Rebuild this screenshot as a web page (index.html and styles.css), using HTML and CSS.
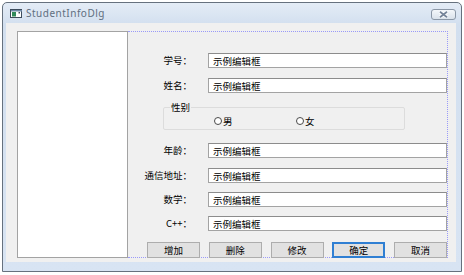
FILE: index.html
```html
<!DOCTYPE html>
<html>
<head>
<meta charset="utf-8">
<title>StudentInfoDlg</title>
<link rel="stylesheet" href="styles.css">
</head>
<body>
<div class="window">
  <div class="titlebar">
    <svg class="appicon" width="12" height="9" viewBox="0 0 12 9">
      <rect x="0.5" y="0.5" width="11" height="8" fill="#ffffff" stroke="#3d4c5c"/>
      <rect x="1" y="1" width="11" height="1.5" fill="#6f8aa8"/>
      <rect x="2" y="3" width="4" height="4.5" fill="#2f8a5a"/>
      <rect x="8.5" y="3" width="1.5" height="1.5" fill="#3d4c5c"/>
    </svg>
    <span class="title">StudentInfoDlg</span>
    <span class="closebtn">
      <svg width="11" height="7" viewBox="0 0 11 7">
        <path d="M2 0.8 L9 6.2 M9 0.8 L2 6.2" stroke="#ffffff" stroke-width="3.4"/>
        <path d="M2 0.8 L9 6.2 M9 0.8 L2 6.2" stroke="#76859a" stroke-width="1.8"/>
      </svg>
    </span>
  </div>
  <div class="client">
    <div class="listbox"></div>
    <div class="form">
      <div class="row">
        <label>学号：</label>
        <input type="text" value="示例编辑框" readonly>
      </div>
      <div class="row gap10">
        <label>姓名：</label>
        <input type="text" value="示例编辑框" readonly>
      </div>
      <fieldset class="group">
        <legend>性别</legend>
        <div class="radios">
          <span class="radio"><span class="dot"></span>男</span>
          <span class="radio"><span class="dot"></span>女</span>
        </div>
      </fieldset>
      <div class="row gap13">
        <label>年龄：</label>
        <input type="text" value="示例编辑框" readonly>
      </div>
      <div class="row gap10">
        <label>通信地址：</label>
        <input type="text" value="示例编辑框" readonly>
      </div>
      <div class="row gap9">
        <label>数学：</label>
        <input type="text" value="示例编辑框" readonly>
      </div>
      <div class="row gap9">
        <label>C++：</label>
        <input type="text" value="示例编辑框" readonly>
      </div>
      <div class="buttons">
        <button>增加</button>
        <button>删除</button>
        <button>修改</button>
        <button class="default">确定</button>
        <button>取消</button>
      </div>
    </div>
  </div>
</div>
</body>
</html>
```

FILE: styles.css
```css
body {
    margin: 0;
    background: #ffffff;
    font-family: "Noto Sans CJK SC", "Noto Sans", sans-serif;
    font-size: 9.5px;
    color: #000000;
}

.window {
    margin: 2px;
    width: 460px;
    height: 270px;
    box-sizing: border-box;
    border: 1px solid #66717e;
    border-radius: 5px 5px 0 0;
    background: linear-gradient(#e4ecf6, #d2dfef 22px, #d8e4f3);
    padding: 0 5px 9px 3px;
    display: flex;
    flex-direction: column;
}

.titlebar {
    height: 20px;
    display: flex;
    align-items: center;
    padding-left: 4px;
}

.appicon {
    display: block;
    margin-right: 4px;
}

.title {
    font-family: "Noto Sans", sans-serif;
    font-size: 10px;
    letter-spacing: 0.5px;
    color: #5f6e80;
}

.closebtn {
    margin-left: auto;
    align-self: flex-start;
    margin-top: 6px;
    width: 25px;
    height: 11px;
    box-sizing: border-box;
    border: 1px solid #8b97a6;
    border-radius: 3px;
    background: linear-gradient(#f4f7fa, #dae2eb);
    display: flex;
    align-items: center;
    justify-content: center;
}

.client {
    flex: 1;
    background: #f0f0f0;
    display: flex;
    padding: 8px 8px 4px 11px;
}

.listbox {
    width: 111px;
    box-sizing: border-box;
    background: #ffffff;
    border: 1px solid #a3a3a3;
}

.form {
    flex: 1;
    border: 1px dotted #9a9af8;
    border-left: none;
    display: flex;
    flex-direction: column;
    padding-top: 21px;
}

.row {
    display: grid;
    grid-template-columns: 64px 1fr;
    column-gap: 16px;
    align-items: center;
    height: 15px;
}

.gap9 { margin-top: 9px; }
.gap10 { margin-top: 10px; }
.gap13 { margin-top: 13px; }

.row label {
    text-align: right;
    white-space: nowrap;
    line-height: 15px;
}

.row input {
    height: 15px;
    width: 100%;
    box-sizing: border-box;
    margin: 0;
    border: 1px solid #a3a3a3;
    border-top-color: #8c8c8c;
    padding: 0 4px;
    font: inherit;
    color: #000000;
    background: #ffffff;
    outline: none;
}

.group {
    margin: 8px 0 0 35px;
    width: 242px;
    box-sizing: border-box;
    border: 1px solid #dcdcdc;
    border-radius: 2px;
    padding: 1px 0 3px 6px;
}

.group legend {
    padding: 0 1px;
    line-height: 13px;
}

.radios {
    display: flex;
    height: 11px;
    align-items: center;
    margin-left: 44px;
}

.radio {
    width: 82px;
    display: flex;
    align-items: center;
}

.dot {
    width: 8px;
    height: 8px;
    box-sizing: border-box;
    border: 1px solid #4a4a4a;
    border-radius: 50%;
    background: #ffffff;
    margin-right: 1px;
}

.buttons {
    display: flex;
    justify-content: space-between;
    margin: auto 0 -1px 19px;
}

.buttons button {
    width: 53px;
    height: 16px;
    box-sizing: border-box;
    border: 1px solid #adadad;
    background: #e1e1e1;
    font: inherit;
    color: #000000;
    padding: 0;
}

.buttons button.default {
    border-color: #2f7fd3;
    box-shadow: inset 0 0 0 1px #2f7fd3;
}
```
